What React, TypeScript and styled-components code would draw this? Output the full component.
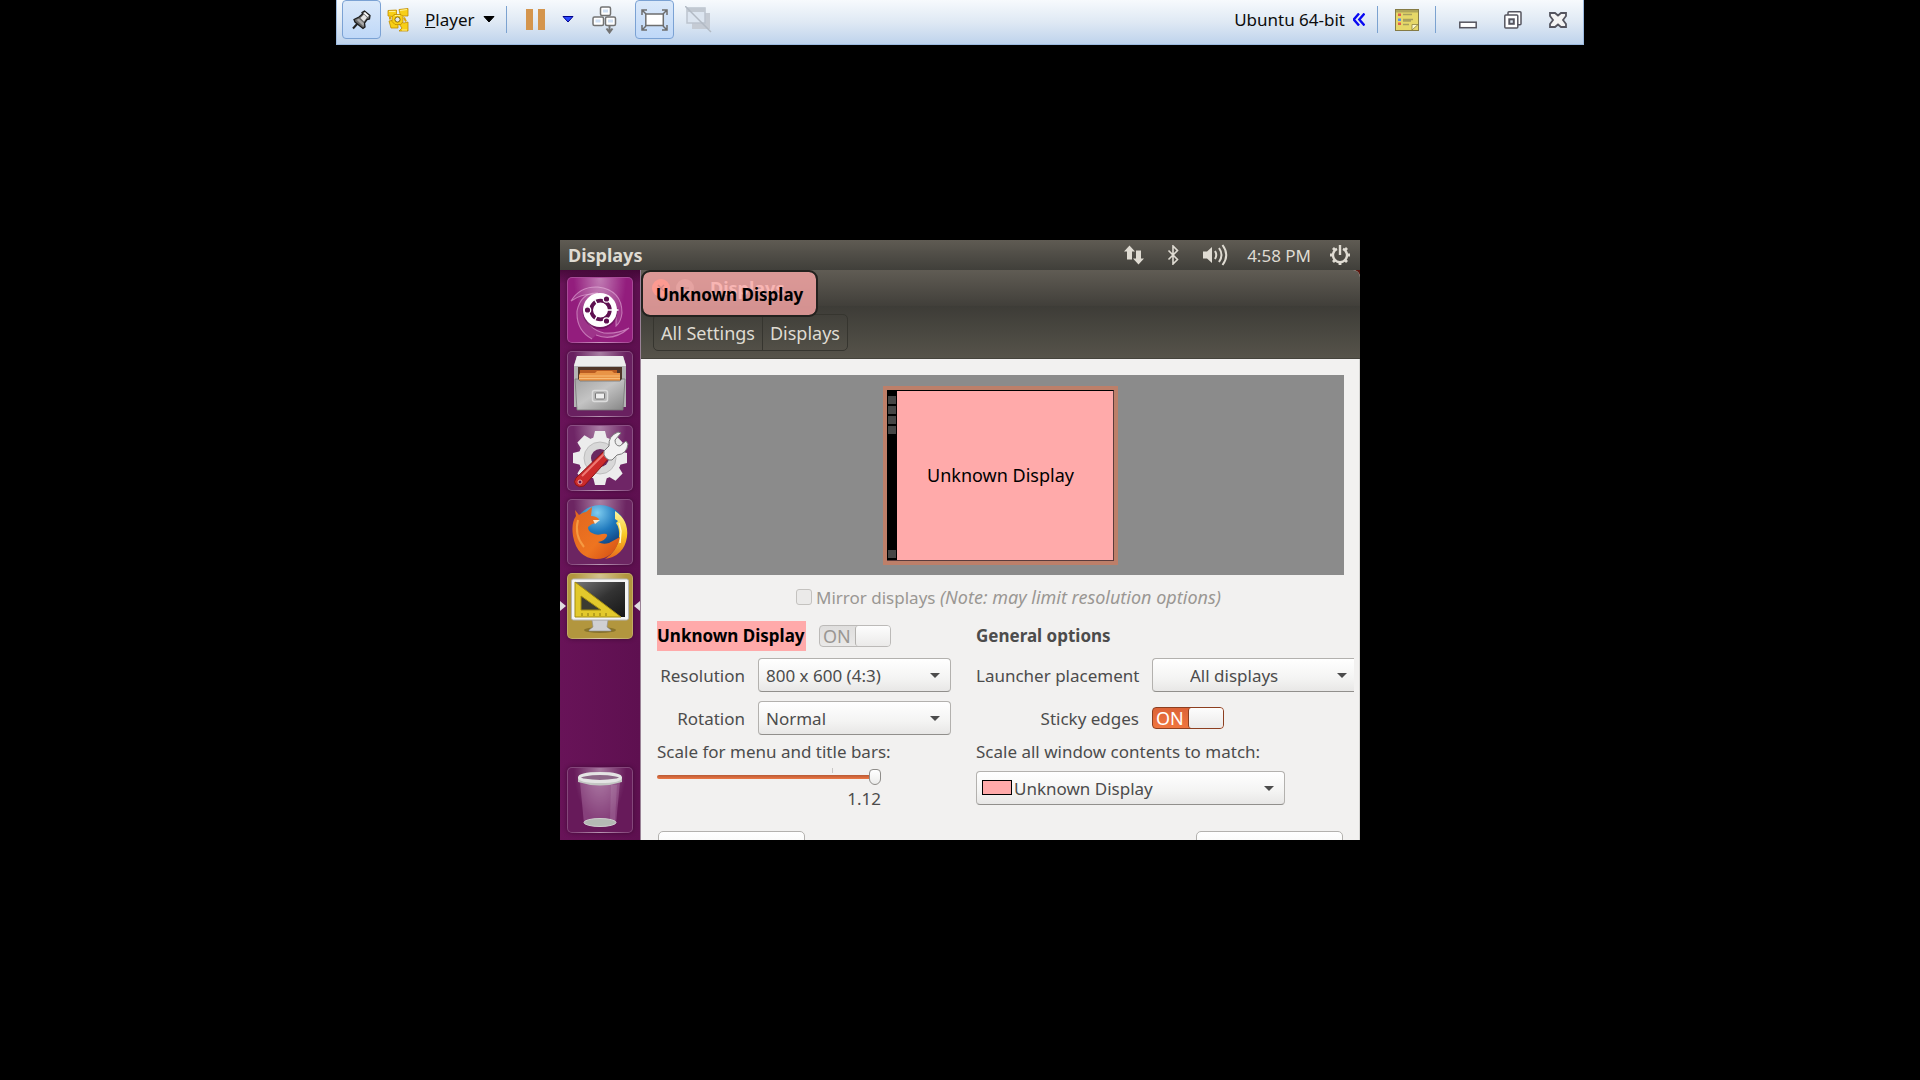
import React from "react";
import styled, { createGlobalStyle, css } from "styled-components";

const sans = '"Noto Sans", "Open Sans", sans-serif';

const GlobalStyle = createGlobalStyle`
  *, *::before, *::after { box-sizing: border-box; }
  html, body { margin: 0; background: #000; }
  body, button, input, select { font-family: ${sans}; font-size: 17px; }
  button { margin: 0; padding: 0; border: 0; background: none; color: inherit; }
  svg { display: block; flex: none; }
`;

const Page = styled.div`
  position: relative;
  min-height: 100vh;
  display: grid;
  place-items: center;
  background: #000;
`;

/* ---------- player bar ---------- */

const BarDock = styled.div`
  position: absolute;
  inset: 0 0 auto 0;
  display: flex;
  justify-content: center;
`;

const PlayerBar = styled.header`
  width: 65%;
  height: 45px;
  display: flex;
  justify-content: space-between;
  padding: 0 3px 0 5px;
  border: 1px solid #9dbbe0;
  border-top: 0;
  background: linear-gradient(#f7fafd, #dfe9f4 50%, #bed3ec);
  color: #0c0c0c;
`;

const BarGroup = styled.div`
  display: flex;
  align-items: center;
  height: 39px;
`;

const BarTools = styled(BarGroup)`
  gap: 8px;
  margin-left: 7px;
`;

const BarButton = styled.button<{ $width?: number; $active?: boolean }>`
  display: flex;
  align-items: center;
  justify-content: center;
  height: 39px;
  width: ${(p) => (p.$width ? `${p.$width}px` : "auto")};
  white-space: nowrap;
  ${(p) =>
    p.$active &&
    css`
      border: 1px solid #7ba2d4;
      border-radius: 4px;
      background: linear-gradient(#dbe9fa, #bfd8f8);
    `}
`;

const MenuButton = styled(BarButton)`
  gap: 8px;
  padding: 0 6px;
`;

const TitleButton = styled(BarButton)`
  gap: 8px;
  padding-right: 3px;
`;

const BarDivider = styled.span<{ $space: number }>`
  width: 1px;
  height: 27px;
  margin: 0 ${(p) => p.$space}px;
  background: #7ba2d0;
`;

/* ---------- guest desktop ---------- */

const Guest = styled.main`
  width: 100%;
  max-width: 800px;
  height: 600px;
  display: flex;
  flex-direction: column;
  overflow: hidden;
  background: #5a140c;
`;

const TopPanel = styled.div`
  flex: none;
  height: 30px;
  display: flex;
  align-items: center;
  justify-content: space-between;
  padding: 0 10px 0 8px;
  background: linear-gradient(#5f5b53, #403f3a);
  color: #dfdbd2;
`;

const PanelTitle = styled.span`
  font-size: 18px;
  font-weight: 700;
`;

const Indicators = styled.div`
  display: flex;
  align-items: center;
  gap: 19px;
`;

const Desktop = styled.div`
  position: relative;
  flex: 1;
  min-height: 0;
  display: flex;
`;

const Launcher = styled.nav`
  flex: none;
  width: 80px;
  display: flex;
  flex-direction: column;
  align-items: center;
  gap: 8px;
  padding: 7px 0;
  background: linear-gradient(rgba(40, 0, 30, 0.5), transparent 14px), linear-gradient(90deg, #681358, #5e1050);
`;

const LauncherSlot = styled.div<{ $last?: boolean }>`
  position: relative;
  width: 100%;
  display: flex;
  justify-content: center;
  margin-top: ${(p) => (p.$last ? "auto" : "0")};
`;

const Tile = styled.button<{ $tint: string }>`
  width: 66px;
  height: 66px;
  display: grid;
  place-items: center;
  border: 1px solid rgba(255, 255, 255, 0.2);
  border-radius: 5px;
  background: radial-gradient(ellipse at 50% 0, rgba(255, 255, 255, 0.42), transparent 58%), ${(p) => p.$tint};
  box-shadow: 0 0 4px rgba(30, 0, 25, 0.5);
`;

const Pip = styled.span<{ $side: "left" | "right" }>`
  position: absolute;
  top: 28px;
  ${(p) => p.$side}: 0;
  border: 5px solid transparent;
  border-${(p) => p.$side}: 6px solid #e0dbe0;
  border-${(p) => (p.$side === "left" ? "right" : "left")}-width: 0;
`;

/* ---------- settings window ---------- */

const Window = styled.section`
  flex: 1;
  min-width: 0;
  display: flex;
  flex-direction: column;
  overflow: hidden;
  border-left: 1px solid #9a8296;
  border-radius: 0 7px 0 0;
  background: #f2f1f0;
  color: #4c4c4c;
`;

const TitleBar = styled.div`
  flex: none;
  height: 36px;
  display: flex;
  align-items: center;
  gap: 6px;
  padding-left: 11px;
  background: linear-gradient(#605c54, #413f3a);
  color: #dfdbd2;
`;

const RoundButton = styled.button<{ $fill: string }>`
  width: 18px;
  height: 18px;
  border-radius: 50%;
  display: grid;
  place-items: center;
  background: ${(p) => p.$fill};
`;

const WindowTitle = styled.h1`
  margin: 0 0 0 10px;
  font-size: 18px;
  font-weight: 700;
`;

const PathArea = styled.div`
  flex: none;
  height: 53px;
  padding: 8px 12px;
  display: flex;
  align-items: flex-start;
  background: linear-gradient(#3d3c37, #56534a);
  border-bottom: 1px solid #45433c;
`;

const PathBar = styled.div`
  display: flex;
  height: 37px;
  border: 1px solid #36352f;
  border-radius: 5px;
  color: #dfdbd2;
`;

const PathButton = styled.button`
  padding: 0 7px;
  font-size: 18px;
  & + & {
    border-left: 1px solid #36352f;
  }
`;

const Badge = styled.div`
  position: absolute;
  top: 0;
  left: 81px;
  width: 177px;
  height: 47px;
  display: grid;
  place-items: center;
  padding-top: 2px;
  border: 2px solid #23221f;
  border-radius: 9px;
  background: rgba(255, 170, 170, 0.78);
  background-clip: padding-box;
  color: #000;
  font-weight: 700;
`;

const Content = styled.div`
  flex: none;
  padding-top: 16px;
  border-right: 1px solid #d6d5d3;
`;

const Arrangement = styled.div`
  height: 200px;
  margin: 0 15px 0 16px;
  display: grid;
  place-items: center;
  background: #8b8b8b;
`;

const Monitor = styled.div`
  position: relative;
  width: 235px;
  height: 179px;
  display: flex;
  border: 4px solid #bd7f69;
  background: #ffaaaa;
`;

const MonitorScreen = styled.div`
  flex: 1;
  display: flex;
  border: 1px solid #5c3b3b;
  border-top-color: #000;
  border-left: 0;
`;

const MonitorStrip = styled.div`
  width: 10px;
  display: flex;
  flex-direction: column;
  align-items: center;
  gap: 2px;
  padding: 5px 0 2px;
  background: #000;
`;

const StripItem = styled.span`
  width: 8px;
  height: 8px;
  background: #454545;
  &:last-child {
    margin-top: auto;
  }
`;

const MonitorName = styled.span`
  position: absolute;
  inset: 0;
  display: grid;
  place-items: center;
  color: #000;
  font-size: 18px;
`;

const MirrorRow = styled.label`
  height: 24px;
  margin-top: 10px;
  padding-left: 17px;
  display: flex;
  align-items: center;
  justify-content: center;
  gap: 4px;
  color: #9a9793;
  white-space: nowrap;
`;

const MirrorNote = styled.em`
  font-size: 18px;
`;

const CheckBox = styled.input`
  appearance: none;
  width: 16px;
  height: 16px;
  margin: 0;
  border: 1px solid #c4c2bf;
  border-radius: 3px;
  background: #ebeae9;
`;

const Options = styled.div`
  display: grid;
  grid-template-columns: minmax(0, 294px) minmax(0, 1fr);
  column-gap: 25px;
  margin-top: 12px;
  padding: 0 5px 0 16px;
`;

const Column = styled.div`
  display: flex;
  flex-direction: column;
`;

const HeadingRow = styled.div`
  height: 30px;
  display: flex;
  align-items: center;
  gap: 13px;
`;

const Heading = styled.h2<{ $marked?: boolean }>`
  margin: 0;
  font-size: 17px;
  font-weight: 700;
  line-height: 30px;
  white-space: nowrap;
  ${(p) =>
    p.$marked &&
    css`
      width: 149px;
      background: #ffaaaa;
      color: #000;
    `}
`;

const FieldRow = styled.div<{ $label: number }>`
  height: 34px;
  margin-top: 7px;
  display: grid;
  grid-template-columns: ${(p) => p.$label}px minmax(0, 1fr);
  align-items: center;
  column-gap: 13px;
  & + & {
    margin-top: 9px;
  }
`;

const FieldLabel = styled.label`
  text-align: right;
  white-space: nowrap;
`;

const SelectBox = styled.div<{ $width?: number }>`
  position: relative;
  width: 100%;
  max-width: ${(p) => (p.$width ? `${p.$width}px` : "none")};
`;

const SelectControl = styled.select<{ $indent?: number; $cut?: boolean }>`
  appearance: none;
  display: block;
  width: 100%;
  height: 34px;
  margin: 0;
  padding: 0 30px 0 ${(p) => p.$indent ?? 7}px;
  border: 1px solid #b3b1ae;
  border-bottom-color: #918f8c;
  border-radius: 4px;
  background: linear-gradient(#ffffff, #f4f4f3 60%, #e8e7e6);
  color: #4c4c4c;
  ${(p) =>
    p.$cut &&
    css`
      border-right: 0;
      border-radius: 4px 0 0 4px;
    `}
`;

const SelectArrow = styled.span<{ $right: number }>`
  position: absolute;
  top: 15px;
  right: ${(p) => p.$right}px;
  border: 5px solid transparent;
  border-top-color: #4c4c4c;
  border-bottom: 0;
  pointer-events: none;
`;

const Swatch = styled.span`
  position: absolute;
  top: 9px;
  left: 6px;
  width: 30px;
  height: 15px;
  border: 1px solid #000;
  background: #ffaaaa;
  pointer-events: none;
`;

const Switch = styled.label<{ $lit?: boolean }>`
  position: relative;
  width: 72px;
  height: 22px;
  display: grid;
  grid-template-columns: 1fr 35px;
  align-items: center;
  border: 1px solid ${(p) => (p.$lit ? "#8d3f20" : "#bcbab8")};
  border-radius: 4px;
  background: ${(p) => (p.$lit ? "linear-gradient(#dc6337, #f0763f)" : "linear-gradient(#dfdedd, #eae9e8)")};
  color: ${(p) => (p.$lit ? "#fff" : "#9a9793")};
  line-height: 20px;
`;

const SwitchInput = styled.input`
  position: absolute;
  inset: 0;
  width: 100%;
  height: 100%;
  margin: 0;
  opacity: 0;
`;

const SwitchText = styled.span`
  padding-left: 3px;
  font-size: 18px;
`;

const SwitchKnob = styled.span<{ $lit?: boolean }>`
  height: 20px;
  border-left: 1px solid ${(p) => (p.$lit ? "#8d3f20" : "#b3b1ae")};
  border-radius: 3px;
  background: linear-gradient(#fdfdfd, #ebeae9);
`;

const ScaleBlock = styled.div`
  margin-top: 5px;
`;

const ScaleLabel = styled.label`
  display: block;
  line-height: 24px;
  white-space: nowrap;
`;

const ScaleSlider = styled.input`
  appearance: none;
  display: block;
  width: 224px;
  height: 25px;
  margin: 0;
  background: linear-gradient(#c9c7c5, #c9c7c5) 175px 4px / 1px 5px no-repeat;
  &::-webkit-slider-runnable-track {
    height: 4px;
    border-radius: 2px;
    background: linear-gradient(#b95a35, #ec7743);
  }
  &::-webkit-slider-thumb {
    appearance: none;
    width: 12px;
    height: 16px;
    margin-top: -6px;
    border: 1px solid #8f8d8a;
    border-radius: 4px 4px 6px 6px;
    background: linear-gradient(#fff, #ececeb);
  }
`;

const ScaleValue = styled.output`
  display: block;
  width: 224px;
  line-height: 20px;
  text-align: right;
`;

const MatchSelect = styled.div`
  padding-top: 7px;
`;

const Footer = styled.div`
  display: flex;
  justify-content: space-between;
  margin-top: 22px;
  padding: 0 16px 0 17px;
`;

const ActionButton = styled.button`
  width: 147px;
  height: 34px;
  padding-bottom: 5px;
  border: 1px solid #b3b1ae;
  border-radius: 5px;
  background: linear-gradient(#fff, #ececeb);
`;

/* ---------- drawings ---------- */

const PinIcon = () => (
  <svg width="19" height="20" viewBox="0 0 19 20">
    <path d="M1 18.500 6 13" stroke="#222" strokeWidth="2" />
    <path d="M2 9.500 7 7 10.500 4 10 2.500 12.500 1l5.500 4.500-.5 3.500-2.500.5-2.500 3.500.5 4-2 1.500L3 12z" fill="#6a6a6a" stroke="#1d1d1d" strokeWidth="1.300" />
    <path d="m4.500 9.800 2.500-1 5 4.500-.5 3z" fill="#aaa" />
    <path d="m8.500 8 3.500-3.500 3 3-3 4z" fill="#e6e6e6" />
    <path d="m12.300 2.600 4 3.800" stroke="#fff" strokeWidth="1.800" />
  </svg>
);

const VmIcon = () => (
  <svg width="30" height="24" viewBox="0 0 30 24">
    <g fill="#f8cf16" stroke="#c08c00" strokeWidth=".8" strokeLinejoin="round">
      <path d="M1 2.500 9.500 2v5L6 8.500 1 8zM12 1.500 21 .5V8h-6l-2-2zM2 13l5-1 4 3v5H4zM14 14l3 1 4-1v9h-9l3-3-3-4z" />
      <path d="M7 6.500h7l2 2v5l-2 3H8l-3-3V9z" />
    </g>
    <path d="m17 9.500 2 4M3 8.500v3" stroke="#dba70a" strokeWidth="2" />
    <circle cx="10.500" cy="11.500" r="2.600" fill="#dfe5ec" stroke="#8a6a00" />
    <path d="M2 3.500h6.500M13 2.500l7-1M8 7.500h5M15 22h5" stroke="#fff08a" />
  </svg>
);

const Caret = ({ color = "#000", edge = "#000" }: { color?: string; edge?: string }) => (
  <svg width="12" height="7" viewBox="0 0 12 7">
    <path d="M1 .5h10L6 6z" fill={color} stroke={edge} />
  </svg>
);

const PauseIcon = () => (
  <svg width="20" height="21" viewBox="0 0 20 21">
    <path d="M0 0h7v21H0zM12 0h7v21h-7z" fill="#d4954d" />
  </svg>
);

const KeysIcon = () => (
  <svg width="25" height="28" viewBox="0 0 25 28">
    <g fill="#fff" stroke="#737373" strokeWidth="1.500">
      <rect x="8.500" y="1" width="10" height="8.500" rx="1.500" />
      <rect x="1" y="11" width="10.500" height="8.500" rx="1.500" />
      <rect x="13.500" y="11" width="10" height="8.500" rx="1.500" />
    </g>
    <path d="M11 3.500h5v3h-5zM3.500 13.500h5v3h-5zM16 13.500h5v3h-5z" fill="#cfe0f4" />
    <path d="M17.500 19.500v6M14.500 22.500l3 4 3-4" fill="none" stroke="#737373" strokeWidth="2" />
  </svg>
);

const FullscreenIcon = () => (
  <svg width="27" height="22" viewBox="0 0 27 22">
    <rect x="4.800" y="5" width="17.500" height="11.500" fill="#fff" stroke="#6e6e6e" strokeWidth="1.500" />
    <path d="M1 6V1h5M1 1l4 4M21 1h5v5M26 1l-4 4M1 16v5h5M1 21l4-4M26 16v5h-5M26 21l-4-4" fill="none" stroke="#6e6e6e" strokeWidth="1.500" />
  </svg>
);

const UnityIcon = () => (
  <svg width="27" height="27" viewBox="0 0 27 27">
    <path d="M7 7h18v16H7z" fill="#c5cbd4" />
    <path d="M2 2h18v15H2z" fill="#dce5f0" stroke="#bcc4ce" strokeWidth="1.500" />
    <path d="M2 2h18v4H2z" fill="#c1c8d1" />
    <path d="M0 0l26 26" stroke="#b2bac4" strokeWidth="1.500" />
  </svg>
);

const CollapseIcon = () => (
  <svg width="12" height="13" viewBox="0 0 12 13">
    <path d="M6 .5.8 6.500 6 12.500M11.500.5 6.300 6.500l5.200 6" fill="none" stroke="#0909f2" strokeWidth="2.400" />
  </svg>
);

const NotesIcon = () => (
  <svg width="24" height="22" viewBox="0 0 24 22">
    <rect x=".5" y=".5" width="23" height="21" fill="#e6d868" stroke="#857b45" />
    <path d="M1 1h22v2.500H1z" fill="#b0a65a" />
    <path d="M8 5.500h9M8 10.500h10M8 12h8M8 15.500h6" stroke="#a9a05c" strokeWidth="1.300" />
    <path d="M3 4.500h3v2.500H3zM3 13.500h3v2.500H3z" fill="#e2604c" />
    <path d="M3 9.500h3v2.500H3z" fill="#5a8ee8" />
    <path d="M17 21v-5.500h6z" fill="#fdf8c9" stroke="#8c8240" strokeWidth=".8" />
  </svg>
);

const MinimizeIcon = () => (
  <svg width="18" height="18" viewBox="0 0 18 18">
    <rect x=".8" y="11.200" width="16.400" height="5.500" fill="#fff" stroke="#55555f" strokeWidth="1.500" />
  </svg>
);

const RestoreIcon = () => (
  <svg width="18" height="18" viewBox="0 0 18 18">
    <rect x="4" y=".8" width="13" height="13" rx="1" fill="#fff" stroke="#55555f" strokeWidth="1.500" />
    <rect x=".8" y="4" width="13" height="13" rx="1" fill="#fff" stroke="#55555f" strokeWidth="1.500" />
    <rect x="5.300" y="8.300" width="4.500" height="4.500" fill="#dfe9f4" stroke="#55555f" strokeWidth="2" />
  </svg>
);

const CloseIcon = () => (
  <svg width="18" height="16" viewBox="0 0 18 16">
    <path d="M1 1h5l3 2.500L12 1h5v3l-3 4 3 4v3h-5l-3-2.500L6 15H1v-3l3-4-3-4z" fill="#f4f4f4" stroke="#55555f" strokeWidth="1.800" />
  </svg>
);

const NetworkIcon = () => (
  <svg width="20" height="20" viewBox="0 0 20 20" fill="#dfdbd2">
    <path d="M5.500.5 0 6.500h3v8h5v-8h3zM14.500 19.500l5.500-6h-3v-8h-5v8H9z" />
  </svg>
);

const BluetoothIcon = () => (
  <svg width="20" height="20" viewBox="0 0 20 20">
    <path d="m5.500 5.500 9 9L10 19V1l4.500 4.500-9 9" fill="none" stroke="#dfdbd2" strokeWidth="1.600" />
  </svg>
);

const SoundIcon = () => (
  <svg width="26" height="22" viewBox="0 0 26 22">
    <path d="M1 7.500h4L10 3v16l-5-4.500H1z" fill="#dfdbd2" />
    <path d="M13 7q2.500 4 0 8M17 4q5 7 0 14M20.500 1q7.500 10 0 20" fill="none" stroke="#dfdbd2" strokeWidth="2" />
  </svg>
);

const SessionIcon = () => (
  <svg width="20" height="20" viewBox="0 0 20 20" fill="none" stroke="#dfdbd2">
    <path d="M13 3.800a7 7 0 1 1-6 0" strokeWidth="2.400" />
    <path d="M10 0v10" strokeWidth="2.400" />
    <path d="M0 10h4M16 10h4M10 16v4M3 3l2.500 2.500M17 3l-2.500 2.500M3 17l2.500-2.500M17 17l-2.500-2.500" strokeWidth="2.800" />
  </svg>
);

const DashIcon = () => (
  <svg width="64" height="64" viewBox="0 0 64 64">
    <g fill="#fff" fillOpacity=".1" stroke="#f3c6ea" strokeOpacity=".5" strokeWidth="1.100">
      <path d="M3 23Q12 8 30 9q24 3 24 26-1 9-6 13 2-29-23-32-12 0-22 7z" />
      <path d="M24 61Q8 52 9 33 13 14 30 15q-14 6-13 19 2 17 19 21 14 1 25-5-16 14-33 7" />
    </g>
    <circle cx="32" cy="33.500" r="17.500" fill="#4d0a42" fillOpacity=".5" />
    <circle cx="32" cy="32" r="17" fill="#fff" />
    <circle cx="32.500" cy="32" r="9.300" fill="none" stroke="#5e1050" strokeWidth="3.800" />
    <path d="M32.500 32 24 17M32.500 32 24 47M32.500 32h18" stroke="#fff" strokeWidth="1.500" />
    <g fill="#5e1050" stroke="#fff" strokeWidth="1.200">
      <circle cx="19.500" cy="32" r="3.200" />
      <circle cx="38.500" cy="21" r="3.200" />
      <circle cx="38.500" cy="43" r="3.200" />
    </g>
    <circle cx="32.500" cy="32" r="7" fill="#fff" />
  </svg>
);

const FilesIcon = () => (
  <svg width="56" height="58" viewBox="0 0 56 58">
    <defs>
      <linearGradient id="cabinet" x1="0" y1="0" x2="1" y2="1">
        <stop offset="0" stopColor="#a4a4a4" />
        <stop offset=".45" stopColor="#c4c4c4" />
        <stop offset="1" stopColor="#858585" />
      </linearGradient>
    </defs>
    <path d="M5 1h46l3 9v42H2V10z" fill="#b4b4b4" />
    <path d="M5 1h46l3 10H2z" fill="#ededed" />
    <path d="M6 12h44v17H6z" fill="#503629" />
    <path d="M8 15h37v12H8z" fill="#b95c22" />
    <path d="M8 18h15l2-2h15l2 2h6v10H7v-8z" fill="#e99446" />
    <path d="M7 21h41M7 23.500h41" stroke="#f7bd78" />
    <path d="M3 24h3l2 2h40l2-2h3l-2 31H5z" fill="url(#cabinet)" stroke="#777" strokeWidth=".8" />
    <rect x="20.500" y="35.500" width="15" height="11" rx="2" fill="#b7b7b7" stroke="#dcdcdc" strokeWidth="1.500" />
    <rect x="23.500" y="38" width="9" height="6" rx="1" fill="#eee" stroke="#777" />
  </svg>
);

const SettingsIcon = () => (
  <svg width="60" height="60" viewBox="0 0 60 60">
    <g fill="#ececec">
      {[0, 45, 90, 135].map((a) => (
        <path key={a} d="M25 3h10l2 8v38l-2 8H25l-2-8V11z" transform={`rotate(${a} 30 30)`} />
      ))}
      <circle cx="30" cy="30" r="21.500" />
    </g>
    <circle cx="30" cy="30" r="16" fill="#d8d8d8" stroke="#bdbdbd" />
    <circle cx="30" cy="30" r="9" fill="#6a2860" />
    <path d="M6 50 34 23l6 6-26 29q-5 2-8-1-3-3 0-7z" fill="#cc2b2b" stroke="#8b1515" />
    <path d="m12 48 23-23" stroke="#ef7a74" strokeWidth="2" />
    <circle cx="10" cy="54" r="2" fill="#641254" stroke="#f5aaa5" />
    <path d="m34 23 5-5q-1-10 9-14l3 1-6 7q0 6 5 6l6-5 2 3q-1 10-11 11l-5 5q-3 1-6-2-3-3-2-7z" fill="#f1f1f1" stroke="#7c7c7c" />
  </svg>
);

const FirefoxIcon = () => (
  <svg width="58" height="58" viewBox="0 0 58 58">
    <defs>
      <radialGradient id="globe" cx=".45" cy=".15" r=".8">
        <stop offset="0" stopColor="#7fcdf0" />
        <stop offset=".45" stopColor="#1f79bd" />
        <stop offset="1" stopColor="#0a2a66" />
      </radialGradient>
      <linearGradient id="fox" x1="0" y1="0" x2="1" y2="1">
        <stop offset="0" stopColor="#e0661f" />
        <stop offset=".6" stopColor="#ee7420" />
        <stop offset="1" stopColor="#d04a12" />
      </linearGradient>
      <linearGradient id="tail" x1="0" y1="0" x2="0" y2="1">
        <stop offset="0" stopColor="#fff6a0" />
        <stop offset=".5" stopColor="#f9c924" />
        <stop offset="1" stopColor="#e7661a" />
      </linearGradient>
    </defs>
    <circle cx="29" cy="28" r="26" fill="url(#globe)" />
    <path d="M44 8q14 9 12 26-3 19-22 22 12-8 14-21 1-10-3-15l2-2-3-2z" fill="url(#tail)" />
    <path d="m48 20 2 8-1 12" fill="none" stroke="#fffad0" strokeWidth="1.500" />
    <path d="M5 13 4 7l4 5q4-3 7-3l6-5-1 9q5 0 8 3-1 4-7 5l-4 3q0 4 4 6 5 3 10 1 6-1 5 2-2 5-9 6 5 3 11 1l11-6q-5 22-24 22Q6 55 2 33 0 20 5 13z" fill="url(#fox)" />
    <path d="m22 17 7 0-5 4z" fill="#ffe5c5" />
    <path d="M7 17q-4 15 6 27" fill="none" stroke="#f69a42" strokeWidth="2" />
  </svg>
);

const DisplaysIcon = () => (
  <svg width="60" height="58" viewBox="0 0 60 58">
    <defs>
      <linearGradient id="screen" x1="0" y1="0" x2="1" y2="1">
        <stop offset="0" stopColor="#777" />
        <stop offset=".5" stopColor="#333" />
        <stop offset="1" stopColor="#161616" />
      </linearGradient>
    </defs>
    <ellipse cx="30" cy="53" rx="16" ry="3" fill="#6d5b20" fillOpacity=".6" />
    <path d="M22 43h16l-1 7 4 3v1H19v-1l4-3z" fill="#cfd0d3" stroke="#8b8b8b" strokeWidth=".6" />
    <rect x="1.500" y="2" width="57" height="41" rx="2" fill="#f4f4f4" stroke="#b5b5b5" />
    <path d="M5 5h50v35H5z" fill="url(#screen)" />
    <path d="M5 5v35h46z" fill="#e3c92c" stroke="#a38c10" />
    <path d="M11 19v14h20z" fill="#3b3b31" stroke="#a38c10" />
    <path d="M12 39v-3M18 39v-3M24 39v-3M30 39v-3M36 39v-3" stroke="#8a760f" />
  </svg>
);

const TrashIcon = () => (
  <svg width="48" height="58" viewBox="0 0 48 58">
    <path d="M4 11h40l-4 42q-16 6-32 0z" fill="#d8a6d0" fillOpacity=".28" />
    <path d="M35 14h6l-2 36h-5z" fill="#fff" fillOpacity=".1" />
    <ellipse cx="24" cy="51.500" rx="16" ry="4" fill="#b4bab4" stroke="#cfcfcf" />
    <path d="M2 6v5q22 7 44 0V6z" fill="#c3c6c3" />
    <ellipse cx="24" cy="6.500" rx="20.500" ry="4" fill="#8c6787" stroke="#e4e4e4" strokeWidth="3" />
  </svg>
);

/* ---------- parts ---------- */

interface LauncherEntry {
  name: string;
  tint: string;
  icon: React.ReactNode;
  running?: boolean;
  last?: boolean;
}

const launcherEntries: LauncherEntry[] = [
  { name: "Search your computer", tint: "#931d7d", icon: <DashIcon /> },
  { name: "Files", tint: "#692060", icon: <FilesIcon /> },
  { name: "System Settings", tint: "#6f2566", icon: <SettingsIcon /> },
  { name: "Firefox", tint: "#6c2562", icon: <FirefoxIcon /> },
  { name: "Displays settings", tint: "#b2963e", icon: <DisplaysIcon />, running: true },
  { name: "Trash", tint: "#671a5a", icon: <TrashIcon />, last: true },
];

interface PickerProps {
  id: string;
  value: string;
  width?: number;
  indent?: number;
  arrowRight?: number;
  cut?: boolean;
  children?: React.ReactNode;
}

const Picker = ({ id, value, width, indent, arrowRight = 11, cut, children }: PickerProps) => (
  <SelectBox $width={width}>
    <SelectControl id={id} $indent={indent} $cut={cut} defaultValue={value}>
      <option>{value}</option>
    </SelectControl>
    {children}
    <SelectArrow $right={arrowRight} />
  </SelectBox>
);

const Toggle = ({ id, name, lit }: { id: string; name: string; lit?: boolean }) => (
  <Switch $lit={lit}>
    <SwitchInput id={id} type="checkbox" role="switch" aria-label={name} defaultChecked disabled={!lit} />
    <SwitchText>ON</SwitchText>
    <SwitchKnob $lit={lit} />
  </Switch>
);

export default function App() {
  const [scale, setScale] = React.useState(1.12);

  return (
    <Page>
      <GlobalStyle />
      <Guest>
        <TopPanel>
          <PanelTitle>Displays</PanelTitle>
          <Indicators>
            <NetworkIcon />
            <BluetoothIcon />
            <SoundIcon />
            <span>4:58 PM</span>
            <SessionIcon />
          </Indicators>
        </TopPanel>
        <Desktop>
          <Launcher>
            {launcherEntries.map((entry) => (
              <LauncherSlot key={entry.name} $last={entry.last}>
                {entry.running && <Pip $side="left" />}
                <Tile $tint={entry.tint} aria-label={entry.name}>
                  {entry.icon}
                </Tile>
                {entry.running && <Pip $side="right" />}
              </LauncherSlot>
            ))}
          </Launcher>
          <Window>
            <TitleBar>
              <RoundButton $fill="#f0603a" aria-label="Close window">
                <svg width="8" height="8" viewBox="0 0 8 8">
                  <path d="m1 1 6 6M7 1 1 7" stroke="#4a1a10" strokeWidth="1.500" />
                </svg>
              </RoundButton>
              <RoundButton $fill="#8a877e" aria-label="Minimize window">
                <svg width="8" height="8" viewBox="0 0 8 8">
                  <path d="M0 4h8" stroke="#3c3b37" strokeWidth="1.500" />
                </svg>
              </RoundButton>
              <WindowTitle>Displays</WindowTitle>
            </TitleBar>
            <PathArea>
              <PathBar>
                <PathButton>All Settings</PathButton>
                <PathButton>Displays</PathButton>
              </PathBar>
            </PathArea>
            <Content>
              <Arrangement>
                <Monitor>
                  <MonitorScreen>
                    <MonitorStrip>
                      <StripItem />
                      <StripItem />
                      <StripItem />
                      <StripItem />
                      <StripItem />
                    </MonitorStrip>
                  </MonitorScreen>
                  <MonitorName>Unknown Display</MonitorName>
                </Monitor>
              </Arrangement>
              <MirrorRow>
                <CheckBox type="checkbox" disabled />
                <span>
                  Mirror displays <MirrorNote>(Note: may limit resolution options)</MirrorNote>
                </span>
              </MirrorRow>
              <Options>
                <Column>
                  <HeadingRow>
                    <Heading $marked>Unknown Display</Heading>
                    <Toggle id="display-on" name="Display enabled" />
                  </HeadingRow>
                  <FieldRow $label={88}>
                    <FieldLabel htmlFor="resolution">Resolution</FieldLabel>
                    <Picker id="resolution" value="800 x 600 (4:3)" />
                  </FieldRow>
                  <FieldRow $label={88}>
                    <FieldLabel htmlFor="rotation">Rotation</FieldLabel>
                    <Picker id="rotation" value="Normal" />
                  </FieldRow>
                  <ScaleBlock>
                    <ScaleLabel htmlFor="scale">Scale for menu and title bars:</ScaleLabel>
                    <ScaleSlider
                      id="scale"
                      type="range"
                      min={0.5}
                      max={1.12}
                      step={0.01}
                      value={scale}
                      onChange={(e) => setScale(Number(e.target.value))}
                    />
                    <ScaleValue htmlFor="scale">{scale.toFixed(2)}</ScaleValue>
                  </ScaleBlock>
                </Column>
                <Column>
                  <HeadingRow>
                    <Heading>General options</Heading>
                  </HeadingRow>
                  <FieldRow $label={163}>
                    <FieldLabel htmlFor="placement">Launcher placement</FieldLabel>
                    <Picker id="placement" value="All displays" indent={37} arrowRight={7} cut />
                  </FieldRow>
                  <FieldRow $label={163}>
                    <FieldLabel htmlFor="sticky">Sticky edges</FieldLabel>
                    <Toggle id="sticky" name="Sticky edges" lit />
                  </FieldRow>
                  <ScaleBlock>
                    <ScaleLabel htmlFor="match">Scale all window contents to match:</ScaleLabel>
                    <MatchSelect>
                      <Picker id="match" value="Unknown Display" width={309} indent={37}>
                        <Swatch />
                      </Picker>
                    </MatchSelect>
                  </ScaleBlock>
                </Column>
              </Options>
              <Footer>
                <ActionButton>Detect Displays</ActionButton>
                <ActionButton>Apply</ActionButton>
              </Footer>
            </Content>
          </Window>
          <Badge>Unknown Display</Badge>
        </Desktop>
      </Guest>

      <BarDock>
        <PlayerBar>
          <BarGroup>
            <BarButton $width={39} $active aria-label="Pin toolbar">
              <PinIcon />
            </BarButton>
            <MenuButton>
              <VmIcon />
              <span>
                <u>P</u>layer
              </span>
              <Caret />
            </MenuButton>
            <BarDivider $space={5} />
            <BarButton $width={49} aria-label="Suspend">
              <PauseIcon />
            </BarButton>
            <BarButton $width={14} aria-label="Power options">
              <Caret color="#2a49ff" edge="#00008b" />
            </BarButton>
            <BarTools>
              <BarButton $width={45} aria-label="Send Ctrl+Alt+Del">
                <KeysIcon />
              </BarButton>
              <BarButton $width={39} $active aria-label="Full screen">
                <FullscreenIcon />
              </BarButton>
              <BarButton $width={33} aria-label="Unity mode" disabled>
                <UnityIcon />
              </BarButton>
            </BarTools>
          </BarGroup>
          <BarGroup>
            <TitleButton>
              Ubuntu 64-bit
              <CollapseIcon />
            </TitleButton>
            <BarDivider $space={9} />
            <BarButton $width={39} aria-label="Messages">
              <NotesIcon />
            </BarButton>
            <BarDivider $space={9} />
            <BarButton $width={45} aria-label="Minimize">
              <MinimizeIcon />
            </BarButton>
            <BarButton $width={45} aria-label="Restore">
              <RestoreIcon />
            </BarButton>
            <BarButton $width={45} aria-label="Close">
              <CloseIcon />
            </BarButton>
          </BarGroup>
        </PlayerBar>
      </BarDock>
    </Page>
  );
}
